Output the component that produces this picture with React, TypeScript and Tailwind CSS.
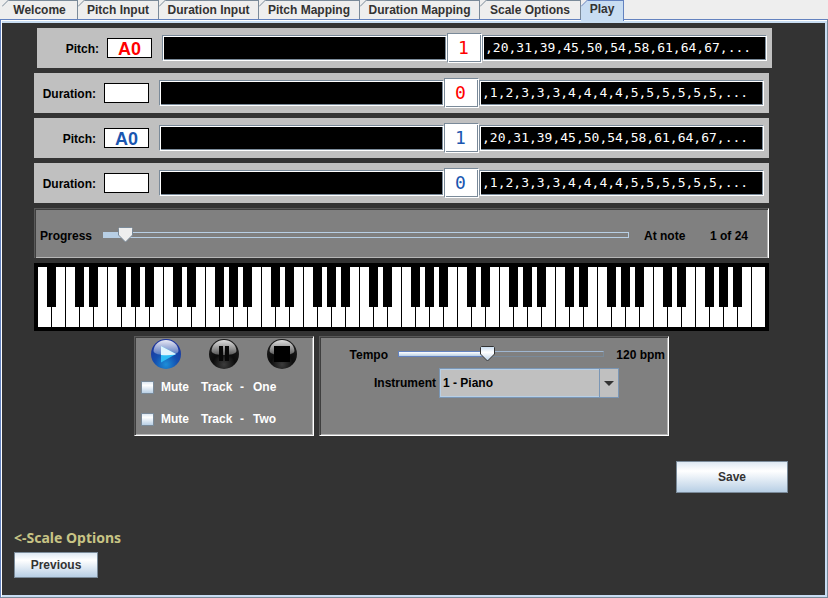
import { useState, type ReactNode } from "react";

const TABS = [
  { name: "Welcome", width: "w-[76px]" },
  { name: "Pitch Input", width: "w-[81px]" },
  { name: "Duration Input", width: "w-[100px]" },
  { name: "Pitch Mapping", width: "w-[101px]" },
  { name: "Duration Mapping", width: "w-[120px]" },
  { name: "Scale Options", width: "w-[101px]" },
  { name: "Play", width: "w-[43px]" },
];

const PITCHES = ",20,31,39,45,50,54,58,61,64,67,...";
const DURATIONS = ",1,2,3,3,3,4,4,4,4,5,5,5,5,5,5,...";

const ETCHED =
  "border border-t-[#7a8a99] border-l-[#7a8a99] border-b-white border-r-white shadow-[inset_1px_1px_#fff,inset_-1px_-1px_#7a8a99]";
const LOWERED =
  "border border-t-[#595959] border-l-[#595959] border-b-white border-r-white bg-[#808080] shadow-[inset_1px_1px_#3e3e3e,inset_-1px_-1px_#b6b6b6]";
const METAL_BUTTON =
  "border border-[#7a8a99] bg-linear-to-b from-[#dde8f3] via-white via-30% to-[#b8cfe5] text-[#333]";

function Tab({ name, width, active, onClick }: { name: string; width: string; active: boolean; onClick: () => void }) {
  const line = active ? "#6382bf" : "#7a8a99";
  return (
    <button
      type="button"
      role="tab"
      aria-selected={active}
      onClick={onClick}
      className={`${width} relative shrink-0 border-t border-r text-[#333] ${
        active ? "z-10 -mb-[2px] border-[#6382bf] bg-[#c8ddf2] pb-1" : "border-[#7a8a99] bg-[#eee] pb-px"
      }`}
    >
      <svg className="absolute -top-px left-0" width="7" height="7" aria-hidden="true">
        <path d="M0 0H7L0 7Z" fill="#eee" />
        <path d="M0 6.5L6.5 0" stroke={line} fill="none" />
      </svg>
      {name}
    </button>
  );
}

function Track({
  kind,
  note,
  count,
  upcoming,
  color,
}: {
  kind: string;
  note: string;
  count: string;
  upcoming: string;
  color: string;
}) {
  return (
    <section className="flex h-10 items-center bg-[#c0c0c0] pr-[5px]">
      <label className="flex items-center gap-2">
        <span className="w-[62px] pt-[2px] text-right">{kind}:</span>
        <input
          readOnly
          value={note}
          className={`${color} h-5 w-[45px] border border-black bg-white pt-[2px] text-center text-[18px] leading-none`}
        />
      </label>
      <input
        readOnly
        aria-label="Played notes"
        className={`${ETCHED} ml-[10px] h-[26px] min-w-0 flex-1 bg-black px-[2px] text-white`}
      />
      <input
        readOnly
        aria-label="Current note"
        value={count}
        className={`${ETCHED} ${color} h-[30px] w-[35px] bg-white pr-[2px] pb-[2px] text-center font-['DejaVu_Sans_Mono',monospace] text-[18px] font-normal`}
      />
      <input
        readOnly
        aria-label="Upcoming notes"
        value={upcoming}
        className={`${ETCHED} h-[26px] min-w-0 flex-1 bg-black px-[2px] pb-[2px] font-['DejaVu_Sans_Mono',monospace] text-[13px] font-normal text-white`}
      />
    </section>
  );
}

function Slider({
  label,
  value,
  onChange,
  bright,
}: {
  label: string;
  value: number;
  onChange: (value: number) => void;
  bright?: boolean;
}) {
  const left = `calc((100% - 15px) * ${value / 100})`;
  const filled = `calc((100% - 15px) * ${value / 100} + 4px)`;
  return (
    <div className="relative flex h-4 w-full items-center">
      <div className={`h-[6px] w-full border ${bright ? "border-[#7a8a99] border-t-[#9fb6d0]" : "border-[#b8cfe5]"}`} />
      <div
        className={`absolute top-[5px] left-0 h-[6px] ${
          bright ? "border border-[#6382bf] bg-linear-to-b from-white to-[#b8cfe5]" : "bg-[#b8cfe5]"
        }`}
        style={{ width: filled }}
      />
      <svg className="absolute top-0 h-4 w-[15px]" style={{ left }} viewBox="0 0 15 16" aria-hidden="true">
        <defs>
          <linearGradient id="thumb" x1="0" y1="0" x2="0" y2="1">
            <stop offset="0" stopColor="#c8ddf2" />
            <stop offset="0.4" stopColor="#fff" />
            <stop offset="1" stopColor="#b8cfe5" />
          </linearGradient>
        </defs>
        <path
          d="M1.5 .5H13.5L14.5 1.5V8L7.5 15L.5 8V1.5Z"
          fill={bright ? "url(#thumb)" : "#eee"}
          stroke={bright ? "#333" : "#7a8a99"}
        />
      </svg>
      <input
        type="range"
        aria-label={label}
        min={0}
        max={100}
        value={value}
        onChange={(e) => onChange(Number(e.target.value))}
        className="absolute inset-0 w-full opacity-0"
      />
    </div>
  );
}

function Keyboard() {
  // Position in the octave starting from A: a sharp follows A, C, D, F and G.
  const sharps = [true, false, true, true, false, true, true];
  return (
    <div className="flex h-[68px] gap-px border-4 border-black bg-black">
      {Array.from({ length: 52 }, (_, i) => (
        <div key={i} className="relative flex-1 bg-white">
          {i < 51 && sharps[i % 7] && <div className="absolute top-0 -right-[5px] z-10 h-10 w-[9px] bg-black" />}
        </div>
      ))}
    </div>
  );
}

function RoundButton({ label, blue, children }: { label: string; blue?: boolean; children: ReactNode }) {
  const id = `ball-${label}`;
  return (
    <button type="button" aria-label={label} className="size-[30px] rounded-full">
      <svg viewBox="0 0 30 30" aria-hidden="true">
        <defs>
          <radialGradient id={id} cx="0.5" cy="0.85" r="0.75">
            <stop offset="0" stopColor={blue ? "#1c8ed8" : "#3c3c3c"} />
            <stop offset="0.5" stopColor={blue ? "#1450b0" : "#0c0c0c"} />
            <stop offset="1" stopColor={blue ? "#1c349c" : "#1c1c1c"} />
          </radialGradient>
          <linearGradient id={`${id}-gloss`} x1="0" y1="0" x2="0" y2="1">
            <stop offset="0" stopColor="#fff" stopOpacity={blue ? 0.9 : 0.85} />
            <stop offset="1" stopColor="#fff" stopOpacity={blue ? 0.25 : 0.3} />
          </linearGradient>
        </defs>
        <circle cx="15" cy="15" r="15" fill={`url(#${id})`} />
        <path d="M2.500 12C3 5 8.500 1 15 1S27 5 27.500 12C27 15 21 16 15 16S3 15 2.500 12Z" fill={`url(#${id}-gloss)`} />
        {children}
      </svg>
    </button>
  );
}

function MuteBox({ track }: { track: string }) {
  return (
    <label className="flex h-8 items-center text-white">
      <input
        type="checkbox"
        className="size-[13px] appearance-none border border-[#7a8a99] bg-linear-to-b from-[#dde8f3] via-white via-30% to-[#b8cfe5] checked:bg-[#6382bf]"
      />
      <span className="ml-[7px] w-10">Mute</span>
      <span className="w-[39px]">Track</span>
      <span className="w-[13px]">-</span>
      <span>{track}</span>
    </label>
  );
}

export default function App() {
  const [tab, setTab] = useState("Play");
  const [progress, setProgress] = useState(3);
  const [tempo, setTempo] = useState(43);

  return (
    <div className="flex min-h-screen flex-col bg-[#eee] font-['Liberation_Sans',Arial,sans-serif] text-[12px] leading-4 font-bold text-black">
      <div role="tablist" className="flex h-[19px] border-l border-transparent pl-px">
        {TABS.map((t) => (
          <Tab key={t.name} name={t.name} width={t.width} active={t.name === tab} onClick={() => setTab(t.name)} />
        ))}
      </div>

      <main className="flex flex-1 flex-col border border-t-[#6382bf] border-r-[#7a8a99] border-b-[#7a8a99] border-l-[#6382bf] bg-[#c8ddf2]">
        <div className="flex flex-1 flex-col border-t border-l border-white pt-[2px] pr-[2px] pb-[2px]">
          <div className="flex flex-1 flex-col bg-[#333] pt-[5px]">
            <div className="pr-[53px] pl-[35px]">
              <Track kind="Pitch" note="A0" count="1" upcoming={PITCHES} color="text-[#f00]" />
            </div>

            <div className="flex flex-col gap-[5px] pt-[5px] pr-14 pl-8">
              <Track kind="Duration" note="" count="0" upcoming={DURATIONS} color="text-[#f00]" />
              <Track kind="Pitch" note="A0" count="1" upcoming={PITCHES} color="text-[#1a56b0]" />
              <Track kind="Duration" note="" count="0" upcoming={DURATIONS} color="text-[#1a56b0]" />

              <section className={`${LOWERED} flex h-[50px] items-center border-b-0 pt-1 pl-[5px]`}>
                <span className="w-[63px]">Progress</span>
                <div className="flex-1 pb-[2px]">
                  <Slider label="Progress" value={progress} onChange={setProgress} />
                </div>
                <span className="ml-[15px] w-[66px]">At note</span>
                <span className="w-[58px]">1 of 24</span>
              </section>

              <Keyboard />

              <div className="flex justify-center gap-[5px]">
                <section className={`${LOWERED} h-[100px] w-[180px] pl-[6px]`}>
                  <div className="flex gap-7 pt-[2px] pb-[2px] pl-[10px]">
                    <RoundButton label="Play" blue>
                      <path d="M10 7V23.500L25 15Z" fill="#2cbcf4" />
                      <path d="M10 7V16Q17 16.500 23.500 15.800L25 15Z" fill="#e0f4fd" />
                    </RoundButton>
                    <RoundButton label="Pause">
                      <path d="M10 7H14V22H10ZM16 7H20V22H16Z" fill="#080808" />
                    </RoundButton>
                    <RoundButton label="Stop">
                      <path d="M7 7H23V23H7Z" fill="#000" />
                    </RoundButton>
                  </div>
                  <MuteBox track="One" />
                  <MuteBox track="Two" />
                </section>

                <section className={`${LOWERED} h-[100px] w-[350px] pt-[9px]`}>
                  <div className="flex items-center pr-[3px]">
                    <span className="w-[78px] pr-[10px] text-right">Tempo</span>
                    <div className="flex-1 pb-[2px]">
                      <Slider label="Tempo" value={tempo} onChange={setTempo} bright />
                    </div>
                    <span className="w-[61px] text-right">120 bpm</span>
                  </div>
                  <label className="flex items-center pt-1">
                    <span className="w-[119px] pr-[3px] text-right">Instrument</span>
                    <span className="relative">
                      <select className="h-[30px] w-[180px] appearance-none border border-[#7a96b5] bg-[#c0c0c0] px-[3px] shadow-[inset_0_0_0_1px_#b8cfe5]">
                        <option>1 - Piano</option>
                      </select>
                      <span className="pointer-events-none absolute top-0 right-0 flex h-[30px] w-5 items-center justify-center border border-[#7a96b5] bg-[#c0c0c0]">
                        <svg width="10" height="5" aria-hidden="true">
                          <path d="M0 0H10L5 5Z" fill="#333" />
                        </svg>
                      </span>
                    </span>
                  </label>
                </section>
              </div>
            </div>

            <div className="flex justify-end pt-[25px] pr-[37px]">
              <button type="button" className={`${METAL_BUTTON} h-8 w-28`}>
                Save
              </button>
            </div>

            <div className="mt-auto flex flex-col items-start pb-[17px] pl-3">
              <label
                htmlFor="previous"
                className="pb-[5px] font-['Noto_Sans',sans-serif] text-[14px] leading-[18px] text-[#c8c485]"
              >
                &lt;-Scale Options
              </label>
              <button id="previous" type="button" className={`${METAL_BUTTON} h-[26px] w-[84px]`}>
                Previous
              </button>
            </div>
          </div>
        </div>
      </main>
    </div>
  );
}
